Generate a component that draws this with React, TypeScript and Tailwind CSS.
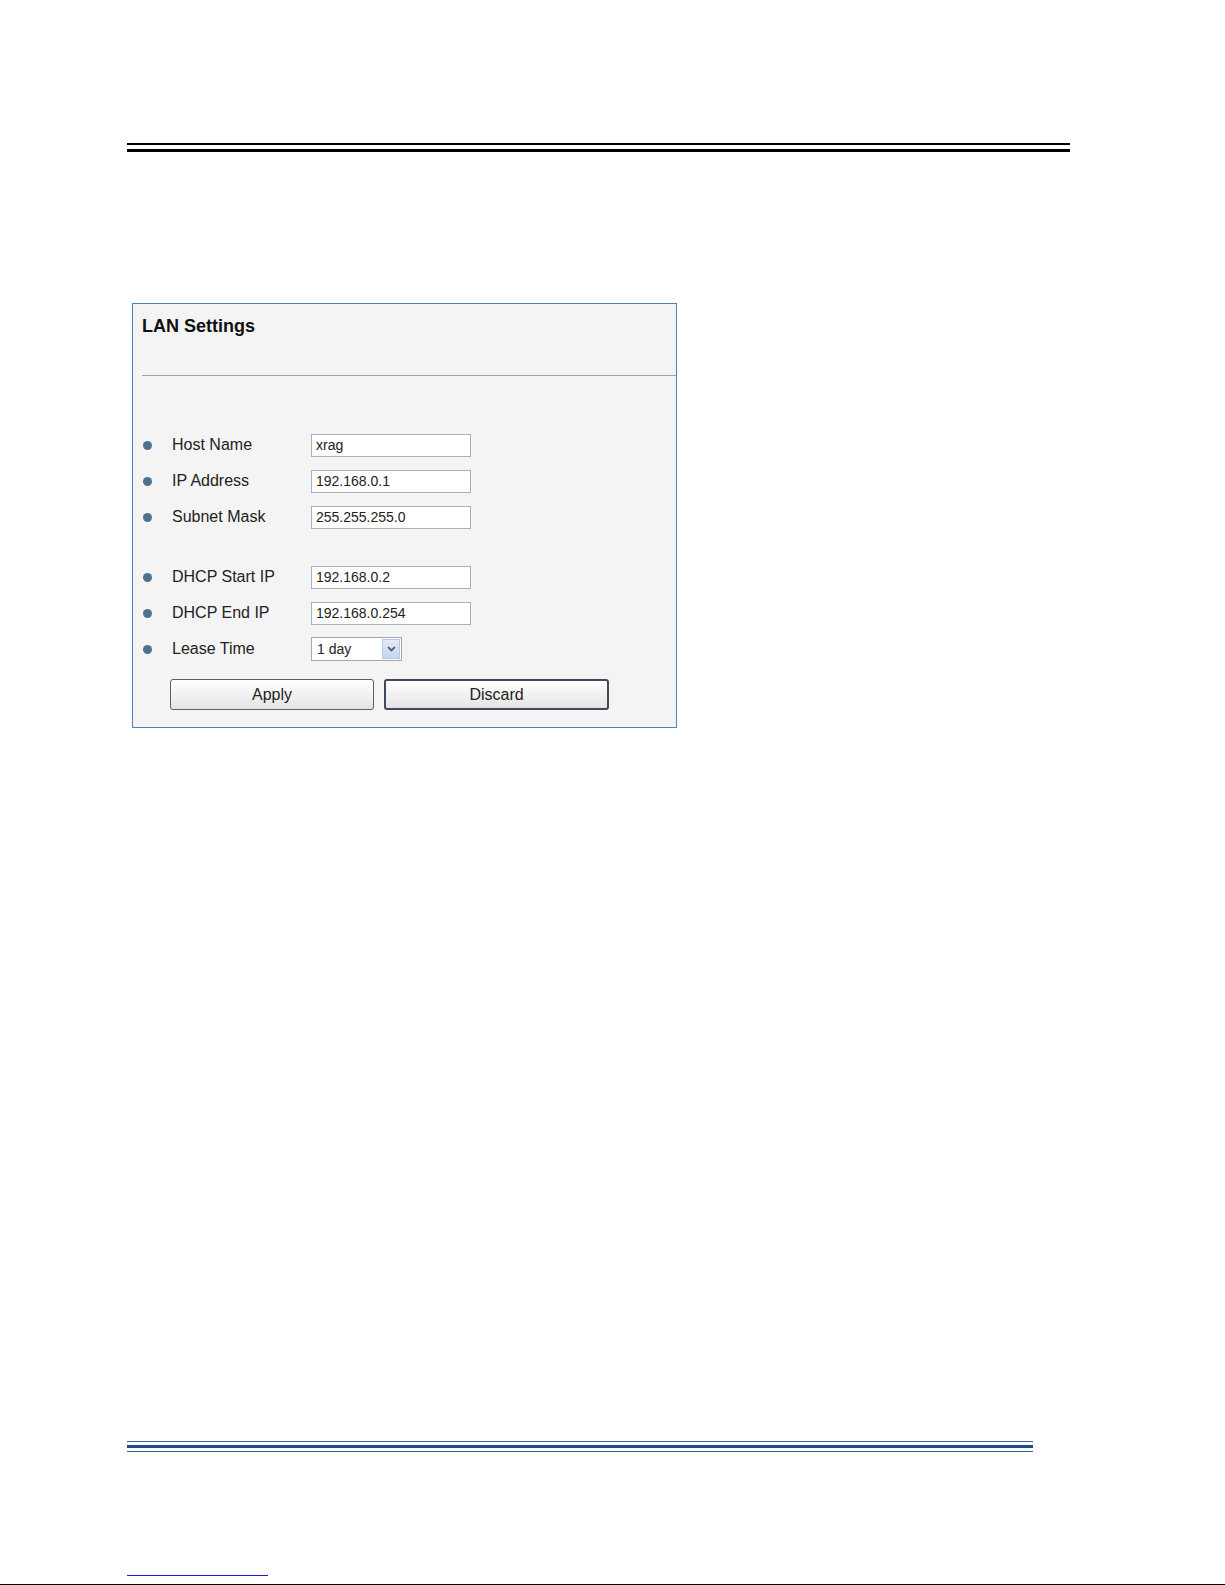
import React from 'react';

interface Field {
  label: string;
  value: string;
  select?: boolean;
}

const groupA: Field[] = [
  { label: 'Host Name', value: 'xrag' },
  { label: 'IP Address', value: '192.168.0.1' },
  { label: 'Subnet Mask', value: '255.255.255.0' },
];

const groupB: Field[] = [
  { label: 'DHCP Start IP', value: '192.168.0.2' },
  { label: 'DHCP End IP', value: '192.168.0.254' },
  { label: 'Lease Time', value: '1 day', select: true },
];

function Row({ field }: { field: Field }) {
  return (
    <div className="flex items-center h-[36px]">
      <span className="ml-[10px] w-[9px] h-[9px] rounded-full bg-[#4f7190]" />
      <span className="ml-[20px] w-[139px] text-[16px] text-[#222]">{field.label}</span>
      {field.select ? (
        <div className="flex items-center w-[91px] h-[24px] border border-[#9fa9b6] bg-white">
          <span className="flex-1 pl-[5px] text-[14px] text-[#222]">{field.value}</span>
          <span className="mr-[1px] w-[18px] h-[20px] flex items-center justify-center border border-[#b7c8e0] bg-gradient-to-b from-[#e4ecf7] to-[#c6d6ec]">
            <svg width="9" height="6" viewBox="0 0 9 6">
              <path d="M1 1 L4.5 4.5 L8 1" fill="none" stroke="#4d6185" strokeWidth="1.8" />
            </svg>
          </span>
        </div>
      ) : (
        <div className="flex items-center w-[160px] h-[23px] border border-[#a9b0b8] bg-white pl-[4px] text-[14px] text-[#222]">
          {field.value}
        </div>
      )}
    </div>
  );
}

export default function App() {
  return (
    <div className="relative w-[1225px] h-[1585px] bg-white overflow-hidden" style={{ fontFamily: '"Liberation Sans", Arial, sans-serif' }}>
      <div className="pt-[143px] pl-[127px]">
        {/* header rule */}
        <div className="w-[943px]">
          <div className="h-[2px] bg-black" />
          <div className="h-[4px]" />
          <div className="h-[3px] bg-black" />
        </div>

        {/* panel */}
        <div className="mt-[151px] ml-[5px] w-[545px] h-[425px] border border-[#4f81bd] bg-[#f4f4f4]">
          <div className="ml-[9px] h-[72px] border-b border-[#a3a3a3] pt-[11px]">
            <h1 className="text-[18px] leading-[22px] font-bold text-[#111]">LAN Settings</h1>
          </div>
          <div className="pt-[51px]">
            {groupA.map((f) => (
              <Row key={f.label} field={f} />
            ))}
            <div className="h-[24px]" />
            {groupB.map((f) => (
              <Row key={f.label} field={f} />
            ))}
            <div className="flex gap-[10px] mt-[12px] ml-[37px]">
              <button className="w-[204px] h-[31px] rounded-[3px] border border-[#5a5f66] bg-gradient-to-b from-white to-[#e4e4e4] text-[16px] text-[#222]">
                Apply
              </button>
              <button className="w-[225px] h-[31px] rounded-[3px] border-2 border-[#3e4a58] bg-gradient-to-b from-white to-[#e4e4e4] text-[16px] text-[#222]">
                Discard
              </button>
            </div>
          </div>
        </div>

        {/* footer rule */}
        <div className="mt-[713px] w-[906px]">
          <div className="h-[1px] bg-[#3a5e96]" />
          <div className="h-[3px]" />
          <div className="h-[3px] bg-[#1f4a8a]" />
          <div className="h-[3px]" />
          <div className="h-[1px] bg-[#3a5e96]" />
        </div>

        <div className="mt-[123px] w-[141px] h-[1px] bg-[#1a1adb]" />
      </div>
      <div className="absolute left-0 right-0 bottom-0 h-[1px] bg-black" />
    </div>
  );
}
